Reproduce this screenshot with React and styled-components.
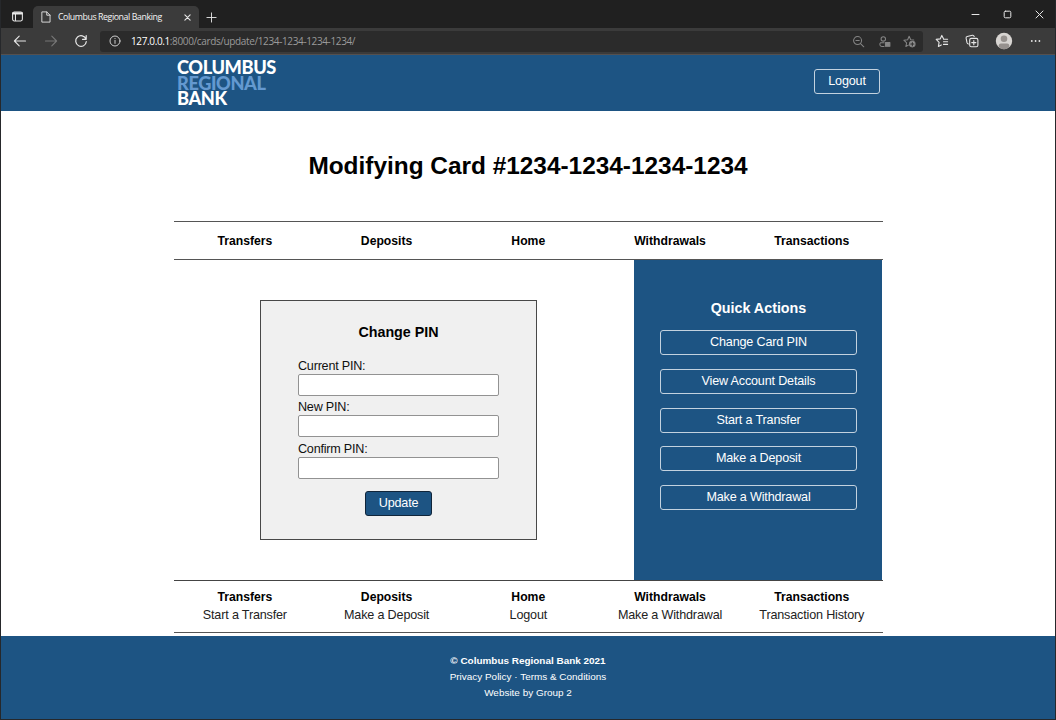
import React from "react";
import styled, { createGlobalStyle } from "styled-components";

const BLUE = "#1d5483";

const Global = createGlobalStyle`
  *, *::before, *::after { box-sizing: border-box; }
  body { margin: 0; background: #fff; font-family: "Liberation Sans", Arial, sans-serif; font-size: 12.2px; color: #000; }
  #root { height: 720px; overflow: hidden; }
  a { color: inherit; text-decoration: none; }
`;

const Window = styled.div`
  width: 1056px; height: 720px; display: flex; flex-direction: column;
  border: 1px solid #26282b; border-top: 0; background: #fff; overflow: hidden;
`;

/* browser frame */
const TitleBar = styled.div`
  height: 28px; flex: none; display: flex; align-items: flex-end; background: #202020; padding-left: 10px;
`;
const TabsIcon = styled.div`width: 22px; height: 22px; display: flex; padding-top: 4px;`;
const Tab = styled.div`
  width: 166px; height: 22px; background: #3b3b3b; border-radius: 5px 5px 0 0;
  display: flex; align-items: center; padding: 0 8px 0 7px; color: #f4f4f4;
`;
const TabTitle = styled.span`
  flex: 1; margin-left: 6px; white-space: nowrap;
  font: 8.8px/14px "Open Sans", "Noto Sans", sans-serif; letter-spacing: -0.42px;
`;
const NewTab = styled.div`width: 24px; height: 22px; display: grid; place-items: center;`;
const WindowButtons = styled.div`
  margin-left: auto; height: 28px; display: flex; align-items: center; gap: 23px; padding-right: 11px;
`;
const Toolbar = styled.div`
  height: 27px; flex: none; display: flex; align-items: center; background: #3b3b3b;
  border-bottom: 1px solid #55504e; padding-left: 12px;
`;
const NavIcons = styled.div`display: flex; align-items: center; gap: 16.5px; width: 87px;`;
const AddressBar = styled.div`
  width: 823px; height: 21px; background: #2b2b2b; border-radius: 3px; display: flex; align-items: center; padding: 0 7px 0 9px;
`;
const Url = styled.span`
  flex: 1; margin-left: 10px; color: #9a9a9a; white-space: nowrap;
  font: 10px/16px "Open Sans", "Noto Sans", sans-serif; letter-spacing: -0.37px;
  b { color: #fff; font-weight: 500; }
`;
const AddressIcons = styled.div`display: flex; align-items: center; gap: 12.3px;`;
const ToolIcons = styled.div`display: flex; align-items: center; gap: 16px; margin-left: 12px;`;

/* page */
const Header = styled.header`
  height: 56px; flex: none; background: ${BLUE}; padding: 0 175px 4px 176px;
  display: flex; justify-content: space-between; align-items: center;
`;
const Logo = styled.div`
  font: 900 18.2px/15.5px Lato, sans-serif; color: #fff; align-self: flex-start; padding-top: 5px;
  display: flex; flex-direction: column; letter-spacing: -0.4px;
`;
const LogoAccent = styled.span`color: #6499d0;`;
const Button = styled.a`
  display: block; height: 25px; line-height: 23px; text-align: center; border-radius: 3px;
  border: 1px solid ${(p) => (p.$dark ? "#10253a" : "#c3d2df")};
  background: ${BLUE}; color: #fff; font-size: 12.6px; letter-spacing: -0.17px; width: ${(p) => p.$width || "auto"};
`;
const Page = styled.main`width: 709px; flex: 1; margin: 0 auto 0 173px;`;
const Title = styled.h1`
  margin: 0; height: 110px; line-height: 110px; text-align: center; font-size: 24.4px; white-space: nowrap;
  padding-right: 1px;
`;
const Nav = styled.nav`
  height: 39px; display: grid; grid-template-columns: repeat(5, 1fr); align-items: center;
  border-top: 1px solid #555; border-bottom: 1px solid #555; text-align: center; font-weight: 700; padding-right: 0.4px;
`;
const Content = styled.div`height: 320px; display: flex;`;
const FormArea = styled.section`flex: 1; padding: 40px 0 0 86px;`;
const PinForm = styled.form`
  width: 277px; height: 240px; border: 1px solid #484848; background: #f0f0f0; padding: 21px 37px 0;
  display: flex; flex-direction: column;
`;
const SectionTitle = styled.h3`margin: 0; font-size: 14.3px; line-height: 20px; text-align: center;`;
const FormTitle = styled(SectionTitle)`margin-bottom: 16px;`;
const Label = styled.label`
  display: block; height: 41.4px; line-height: 16px; color: #111; white-space: nowrap;
  font-size: 12.6px; letter-spacing: -0.22px;
`;
const Input = styled.input`
  display: block; width: 201px; height: 22px; border: 1px solid #929292; border-radius: 2px; background: #fff; outline: none;
`;
const Submit = styled(Button)`margin: 9px auto 0 67px;`;
const Sidebar = styled.aside`
  width: 248px; margin-right: 1px; background: ${BLUE}; color: #fff; padding: 38px 25px 0 26px;
`;
const ActionList = styled.div`margin-top: 12.4px; display: grid; gap: 13.6px;`;
const LinkColumns = styled.div`
  height: 53px; border-top: 1px solid #444; border-bottom: 1px solid #555; padding: 7px 0.4px 0 0;
  display: grid; grid-template-columns: repeat(5, 1fr); text-align: center; line-height: 18px; color: #222;
  b { display: block; color: #000; }
  a { font-size: 12.6px; letter-spacing: -0.17px; }
`;
const Footer = styled.footer`
  height: 83px; flex: none; background: ${BLUE}; color: #fff; text-align: center;
  font-size: 9.95px; line-height: 16px; padding: 17px 0 0 0;
`;

const Icon = ({ size = 12, view = 16, color = "#e6e6e6", w = 1.3, children }) => (
  <svg width={size} height={size} viewBox={`0 0 ${view} ${view}`} fill="none" stroke={color}
    strokeWidth={w} strokeLinecap="round" strokeLinejoin="round" style={{ flex: "none" }}>{children}</svg>
);

const columns = [
  ["Transfers", "Start a Transfer"],
  ["Deposits", "Make a Deposit"],
  ["Home", "Logout"],
  ["Withdrawals", "Make a Withdrawal"],
  ["Transactions", "Transaction History"],
];
const actions = ["Change Card PIN", "View Account Details", "Start a Transfer", "Make a Deposit", "Make a Withdrawal"];

export default function App() {
  return (
    <Window>
      <Global />
      <TitleBar>
        <TabsIcon>
          <Icon size={13}><rect x="2" y="2.5" width="12" height="11" rx="2" /><path d="M2.5 4.2h11" strokeWidth="2.6" /><path d="M5.5 5v8" /></Icon>
        </TabsIcon>
        <Tab>
          <Icon size={12} w={1.2}><path d="M3 1.2h6l4.4 4.4v9.2H3zM9 1.2v4.4h4.4" /></Icon>
          <TabTitle>Columbus Regional Banking</TabTitle>
          <Icon size={7} view={8}><path d="M1 1l6 6M7 1 1 7" /></Icon>
        </Tab>
        <NewTab><Icon size={11} view={12} w={1}><path d="M6 1v10M1 6h10" /></Icon></NewTab>
        <WindowButtons>
          <Icon size={9} view={9} w={1}><path d="M1 4.5h7" /></Icon>
          <Icon size={9} view={9} w={1}><rect x="1.2" y="1.2" width="6.6" height="6.6" rx="1.2" /></Icon>
          <Icon size={9} view={9} w={1}><path d="M1 1l7 7M8 1 1 8" /></Icon>
        </WindowButtons>
      </TitleBar>
      <Toolbar>
        <NavIcons>
          <Icon size={14} view={14} w={1.1}><path d="M12.5 7H1.8M6.2 2.2 1.4 7l4.8 4.8" /></Icon>
          <Icon size={14} view={14} w={1.1} color="#777"><path d="M1.5 7h10.7M7.8 2.2 12.6 7l-4.8 4.8" /></Icon>
          <Icon size={14} view={14} w={1.2}><path d="M12 5.2A5.3 5.3 0 1 0 12.3 7.6M12.2 1.6v3.7H8.5" /></Icon>
        </NavIcons>
        <AddressBar>
          <Icon size={12} view={12} w={1} color="#cfcfcf"><circle cx="6" cy="6" r="5" /><path d="M6 5.4v3M6 3.5v.2" /></Icon>
          <Url><b>127.0.0.1</b>:8000/cards/update/1234-1234-1234-1234/</Url>
          <AddressIcons>
            <Icon size={13} view={14} w={1.1} color="#858585"><circle cx="6" cy="6" r="4.3" /><path d="M9.2 9.2l3.5 3.5M4.2 6h3.6" /></Icon>
            <Icon size={13} view={14} w={1.1} color="#858585"><circle cx="5.7" cy="4.2" r="2.4" /><path d="M6.5 12.4H4.3C1.9 12.4 1.4 9.6 2.6 8.4H6.5" /><rect x="8" y="8" width="4.8" height="4.2" fill="#858585" /></Icon>
            <Icon size={13} view={14} w={1.1} color="#858585"><path d="M11.6 5.5 8.3 5.1 6.6 1.4 5 5.1.9 5.6 3.9 8.4 3.1 12.4 5.8 10.9" /><circle cx="10" cy="9.8" r="3" fill="#959595" /><path d="M8.3 9.8h3.4M10 8.1v3.4" stroke="#2b2b2b" /></Icon>
          </AddressIcons>
        </AddressBar>
        <ToolIcons>
          <Icon size={14} view={14} w={1.1}><path d="M8.4 4.6 6.8 1.4 5.2 4.9 1.2 5.4 4.1 8.3 3.4 12.4 6.3 10.9M8.5 5.2H12.6M8.5 7.8H12.6M8.5 10.4H12.6" /></Icon>
          <Icon size={14} view={14} w={1.1}><rect x="4.7" y="4.4" width="8.2" height="8.4" rx="1.6" /><path d="M8.8 6.5v4.2M6.7 8.6h4.2M3.3 10 Q2.3 9.7 2 8.7L1.1 4.2Q.9 2.8 2.2 2.5L7.4 1.3Q8.7 1.1 9.2 2.5" /></Icon>
          <Icon size={18} view={18} w={0}><circle cx="9" cy="9" r="8.2" fill="#d8d5d2" /><circle cx="9" cy="6.8" r="3.3" fill="#96918e" /><path d="M3.6 14.4Q3.6 11.4 6 11.4h6q2.4 0 2.4 3Q12.2 17.2 9 17.2T3.6 14.4" fill="#96918e" /></Icon>
          <Icon size={12} view={12} w={0}><g fill="#e6e6e6"><circle cx="2.8" cy="6" r=".9" /><circle cx="6.6" cy="6" r=".9" /><circle cx="10.4" cy="6" r=".9" /></g></Icon>
        </ToolIcons>
      </Toolbar>
      <Header>
        <Logo><span>COLUMBUS</span><LogoAccent>REGIONAL</LogoAccent><span>BANK</span></Logo>
        <Button href="#" $width="66px">Logout</Button>
      </Header>
      <Page>
        <Title>Modifying Card #1234-1234-1234-1234</Title>
        <Nav>{columns.map(([name]) => <a href="#" key={name}>{name}</a>)}</Nav>
        <Content>
          <FormArea>
            <PinForm>
              <FormTitle>Change PIN</FormTitle>
              <Label>Current PIN:<Input type="password" /></Label>
              <Label>New PIN:<Input type="password" /></Label>
              <Label>Confirm PIN:<Input type="password" /></Label>
              <Submit href="#" $dark $width="67px">Update</Submit>
            </PinForm>
          </FormArea>
          <Sidebar>
            <SectionTitle>Quick Actions</SectionTitle>
            <ActionList>{actions.map((a) => <Button href="#" key={a}>{a}</Button>)}</ActionList>
          </Sidebar>
        </Content>
        <LinkColumns>
          {columns.map(([name, link]) => <div key={name}><b>{name}</b><a href="#">{link}</a></div>)}
        </LinkColumns>
      </Page>
      <Footer>
        <b>© Columbus Regional Bank 2021</b><br />
        <a href="#">Privacy Policy</a> · <a href="#">Terms &amp; Conditions</a><br />
        Website by Group 2
      </Footer>
    </Window>
  );
}
